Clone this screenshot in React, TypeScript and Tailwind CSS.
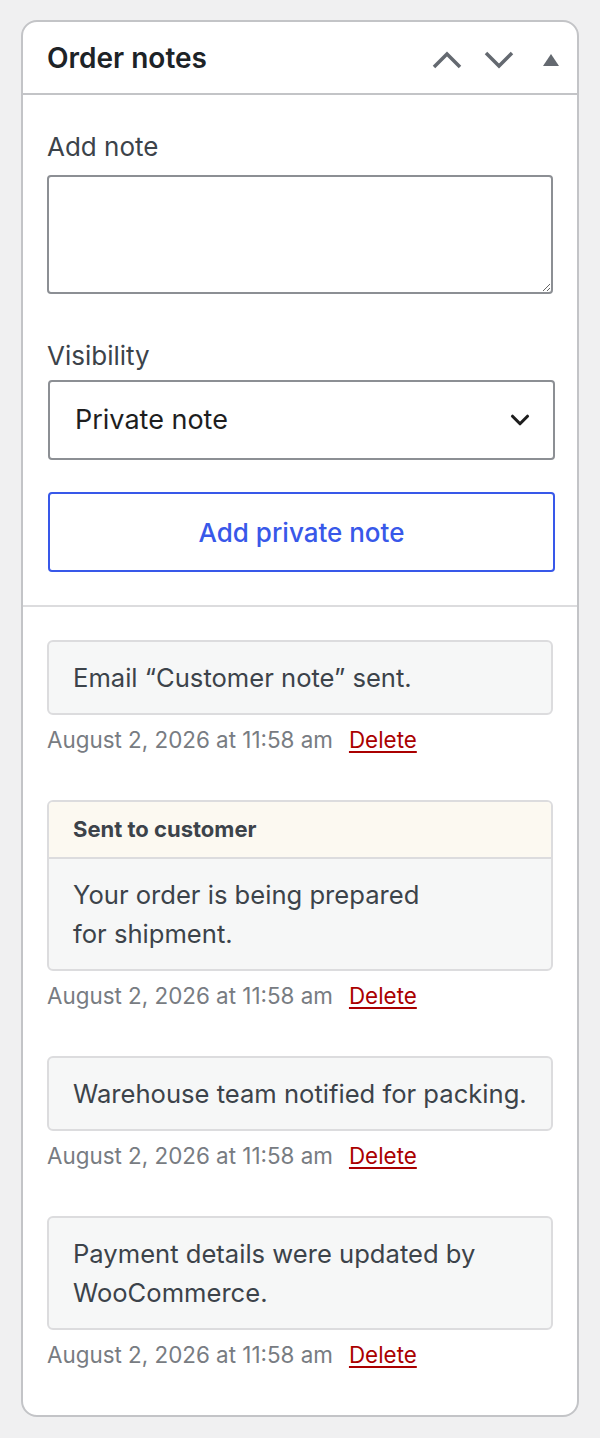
import { ChevronDown } from "lucide-react";

type Note = {
  text: React.ReactNode;
  customer?: boolean;
};

const notes: Note[] = [
  { text: "Email \u201cCustomer note\u201d sent." },
  {
    text: (
      <>
        Your order is being prepared
        <br />
        for shipment.
      </>
    ),
    customer: true,
  },
  { text: "Warehouse team notified for packing." },
  { text: "Payment details were updated by WooCommerce." },
];

function NoteItem({ note }: { note: Note }) {
  return (
    <li className="mb-[44px] last:mb-0">
      <div className="overflow-hidden rounded-[6px] border-2 border-[#dcdcde] bg-[#f6f7f7]">
        {note.customer && (
          <div className="border-b-2 border-[#dcdcde] bg-[#fcf9f1] px-6 py-[13px] text-[22px] font-bold leading-[29px] text-[#3c434a]">
            Sent to customer
          </div>
        )}
        <p className="py-[16px] pl-6 pr-4 text-[25.6px] leading-[39px] text-[#3c434a]">{note.text}</p>
      </div>
      <div className="mt-[9px] flex items-center gap-4 text-[22.4px] leading-[32px] text-[#787c82]">
        <span>August 2, 2026 at 11:58 am</span>
        <a href="#" className="text-[#a00] underline underline-offset-[3px]">
          Delete
        </a>
      </div>
    </li>
  );
}

export default function App() {
  return (
    <div className="min-h-[1438px] bg-[#f0f0f1] pt-5 font-['Inter',sans-serif]">
      <div className="ml-[21px] w-[558px] overflow-hidden rounded-[16px] border-2 border-[#c3c4c7] bg-white">
        <div className="flex h-[73px] items-center justify-between border-b-2 border-[#c3c4c7] pl-[24px]">
          <h2 className="text-[28px] font-semibold text-[#1d2327]">Order notes</h2>
          <div className="flex items-center pt-1 text-[#646970]">
            <button className="flex h-[52px] w-[52px] items-center justify-center">
              <svg width="30" height="18" viewBox="0 0 30 18" fill="none">
                <path d="M2 16 L15 3 L28 16" stroke="currentColor" strokeWidth="3.5" />
              </svg>
            </button>
            <button className="flex h-[52px] w-[52px] items-center justify-center">
              <svg width="30" height="18" viewBox="0 0 30 18" fill="none">
                <path d="M2 2 L15 15 L28 2" stroke="currentColor" strokeWidth="3.5" />
              </svg>
            </button>
            <button className="flex h-[52px] w-[52px] items-center justify-center">
              <svg width="18" height="14" viewBox="0 0 18 14">
                <path d="M9 1 L17 13 L1 13 Z" fill="currentColor" />
              </svg>
            </button>
          </div>
        </div>

        <div className="border-b-2 border-[#dcdcde] pb-[33px] pl-[24px] pr-[24px] pt-[34px]">
          <label className="block text-[26px] leading-[36px] text-[#3c434a]">Add note</label>
          <textarea className="mt-[10px] block h-[119px] w-full rounded-[4px] border-2 border-[#8c8f94] px-3 py-2 text-[24px] outline-none" />

          <label className="mt-[44px] block text-[26px] leading-[36px] text-[#3c434a]">Visibility</label>
          <div className="relative ml-px mr-[-2px] mt-[6px]">
            <select className="block h-[80px] w-full appearance-none rounded-[4px] border-2 border-[#8c8f94] bg-white pl-[25px] text-[27px] text-[#1e1e1e] outline-none">
              <option>Private note</option>
              <option>Note to customer</option>
            </select>
            <ChevronDown
              className="pointer-events-none absolute right-[20px] top-1/2 h-[30px] w-[30px] -translate-y-1/2 text-[#1e1e1e]"
              strokeWidth={2.5}
            />
          </div>

          <button className="ml-px mr-[-2px] mt-[32px] block h-[80px] w-[calc(100%+1px)] rounded-[4px] border-2 border-[#3858e9] bg-white text-[26px] font-medium text-[#3858e9]">
            Add private note
          </button>
        </div>

        <ul className="pb-[44px] pl-[24px] pr-[24px] pt-[33px]">
          {notes.map((n, i) => (
            <NoteItem key={i} note={n} />
          ))}
        </ul>
      </div>
    </div>
  );
}
